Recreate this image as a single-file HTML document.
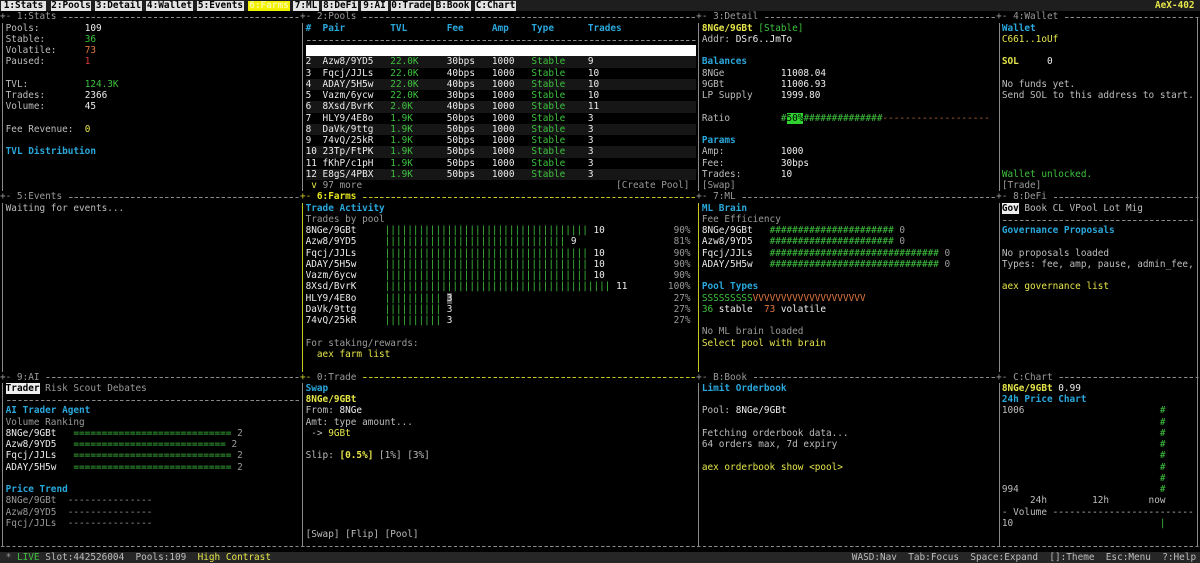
<!DOCTYPE html>
<html><head><meta charset="utf-8">
<style>
*{margin:0;padding:0;box-sizing:border-box}
body{width:1200px;height:563px;background:#000;overflow:hidden;position:relative;font-family:"DejaVu Sans Mono","Liberation Mono",monospace;font-size:9.4px;line-height:11.26px;color:#bdbdbd}
.p{position:absolute;white-space:normal}
.p>div{height:11.26px;white-space:pre}
.c{color:#2aa8dc;font-weight:bold}
.w{color:#ececec}
.gr{color:#3ec23e}
.y{color:#e6e64a}
.o{color:#e07840}
.r{color:#e03a3a}
.b{font-weight:bold}
.dim{color:#9a9a9a}
.hl{position:absolute;height:1px;background-image:repeating-linear-gradient(90deg,var(--bc) 0 3.4px,transparent 3.4px 5.66px)}
.vl{position:absolute;width:1px;background:var(--bc)}
.dl{background-image:repeating-linear-gradient(90deg,#8a8a8a 0 3.4px,transparent 3.4px 5.66px);background-size:100% 1px;background-repeat:no-repeat;background-position:1.1px 6px}
.tt{position:absolute;white-space:pre;background:#000;color:#9a9a9a}
.tab{position:absolute;top:1px;height:10px;background:#e4e4e4;color:#000;font-weight:bold;line-height:10px;text-align:center;font-size:9.4px}
.inv{background:#eee;color:#000;font-weight:bold}
</style></head><body>
<div style="position:absolute;left:0;top:0;width:1200px;height:11.26px;background:#1e1e1e"></div>
<div class="tab" style="left:1px;width:45px">1:Stats</div>
<div class="tab" style="left:51px;width:40px">2:Pools</div>
<div class="tab" style="left:95px;width:47px">3:Detail</div>
<div class="tab" style="left:146px;width:47px">4:Wallet</div>
<div class="tab" style="left:197px;width:47px">5:Events</div>
<div class="tab" style="left:248px;width:42px;background:#f2f200;color:#fafaa0">6:Farms</div>
<div class="tab" style="left:293px;width:26px">7:ML</div>
<div class="tab" style="left:322px;width:36px">8:DeFi</div>
<div class="tab" style="left:361px;width:27px">9:AI</div>
<div class="tab" style="left:391px;width:40px">0:Trade</div>
<div class="tab" style="left:434px;width:37px">B:Book</div>
<div class="tab" style="left:475px;width:41px">C:Chart</div>
<div class="p y b" style="left:1155px;top:0"><div>AeX-402</div></div>

<div class="hl" style="--bc:#8a8a8a;left:1px;top:17px;width:1198px"></div>
<div class="hl" style="--bc:#8a8a8a;left:1px;top:197px;width:1198px"></div>
<div class="hl" style="--bc:#c8c820;left:301px;top:197px;width:397px"></div>
<div class="hl" style="--bc:#8a8a8a;left:1px;top:377px;width:1198px"></div>
<div class="hl" style="--bc:#c8c820;left:301px;top:377px;width:397px"></div>
<div class="hl" style="--bc:#8a8a8a;left:1px;top:546px;width:1198px"></div>
<div class="vl" style="--bc:#8a8a8a;left:2px;top:17px;height:529px"></div>
<div class="vl" style="--bc:#8a8a8a;left:302px;top:17px;height:529px"></div>
<div class="vl" style="--bc:#c8c820;left:302px;top:198px;height:179px"></div>
<div class="vl" style="--bc:#8a8a8a;left:698px;top:17px;height:529px"></div>
<div class="vl" style="--bc:#c8c820;left:698px;top:198px;height:179px"></div>
<div class="vl" style="--bc:#8a8a8a;left:999px;top:17px;height:529px"></div>
<div class="vl" style="--bc:#8a8a8a;left:1197px;top:17px;height:529px"></div>
<div class="tt" style="left:0;top:11.26px">+- 1:Stats </div>
<div class="tt" style="left:299.98px;top:11.26px">+- 2:Pools </div>
<div class="tt" style="left:696.18px;top:11.26px">+- 3:Detail </div>
<div class="tt" style="left:996.16px;top:11.26px">+- 4:Wallet </div>
<div class="tt" style="left:0;top:191.42px">+- 5:Events </div>
<div class="tt" style="left:299.98px;top:191.42px;color:#c8c820">+- <span class="b" style="color:#e6e61e">6:Farms</span> </div>
<div class="tt" style="left:696.18px;top:191.42px">+- 7:ML </div>
<div class="tt" style="left:996.16px;top:191.42px">+- 8:DeFi </div>
<div class="tt" style="left:0;top:371.58px">+- 9:AI </div>
<div class="tt" style="left:299.98px;top:371.58px;color:#c8c820">+- <span style="color:#9a9a9a">0:Trade</span> </div>
<div class="tt" style="left:696.18px;top:371.58px">+- B:Book </div>
<div class="tt" style="left:996.16px;top:371.58px">+- C:Chart </div>

<div class="p" style="left:5.66px;top:22.52px;width:294px">
<div>Pools:        <span class="w">109</span></div>
<div>Stable:       <span class="gr">36</span></div>
<div>Volatile:     <span class="o">73</span></div>
<div>Paused:       <span class="r">1</span></div>
<div> </div>
<div>TVL:          <span class="gr">124.3K</span></div>
<div>Trades:       <span class="w">2366</span></div>
<div>Volume:       <span class="w">45</span></div>
<div> </div>
<div>Fee Revenue:  <span class="y">0</span></div>
<div> </div>
<div class="c">TVL Distribution</div>
</div>

<div class="p w" style="left:305.64px;top:22.52px;width:390.5px">
<div class="c">#  Pair        TVL       Fee     Amp    Type      Trades</div>
<div class="dl"> </div>
<div style="background:#fff"> </div>
<div style="background:#161616">2  Azw8/9YD5   <span class="gr">22.0K</span>     30bps   1000   <span class="gr">Stable</span>    9</div>
<div>3  Fqcj/JJLs   <span class="gr">22.0K</span>     40bps   1000   <span class="gr">Stable</span>    10</div>
<div style="background:#161616">4  ADAY/5H5w   <span class="gr">22.0K</span>     40bps   1000   <span class="gr">Stable</span>    10</div>
<div>5  Vazm/6ycw   <span class="gr">22.0K</span>     30bps   1000   <span class="gr">Stable</span>    10</div>
<div style="background:#161616">6  8Xsd/BvrK   <span class="gr">2.0K</span>      40bps   1000   <span class="gr">Stable</span>    11</div>
<div>7  HLY9/4E8o   <span class="gr">1.9K</span>      50bps   1000   <span class="gr">Stable</span>    3</div>
<div style="background:#161616">8  DaVk/9ttg   <span class="gr">1.9K</span>      50bps   1000   <span class="gr">Stable</span>    3</div>
<div>9  74vQ/25kR   <span class="gr">1.9K</span>      50bps   1000   <span class="gr">Stable</span>    3</div>
<div style="background:#161616">10 23Tp/FtPK   <span class="gr">1.9K</span>      50bps   1000   <span class="gr">Stable</span>    3</div>
<div>11 fKhP/c1pH   <span class="gr">1.9K</span>      50bps   1000   <span class="gr">Stable</span>    3</div>
<div style="background:#161616">12 E8gS/4PBX   <span class="gr">1.9K</span>      50bps   1000   <span class="gr">Stable</span>    3</div>
<div class="dim"> <span class="y">v</span> 97 more                                             [Create Pool]</div>
</div>

<div class="p" style="left:701.84px;top:22.52px;width:294px">
<div><span class="y b">8NGe/9GBt</span> <span class="gr">[Stable]</span></div>
<div>Addr: <span class="w">DSr6..JmTo</span></div>
<div> </div>
<div class="c">Balances</div>
<div>8NGe          <span class="w">11008.04</span></div>
<div>9GBt          <span class="w">11006.93</span></div>
<div>LP Supply     <span class="w">1999.80</span></div>
<div> </div>
<div>Ratio         <span class="gr">#</span><span style="background:#2ed12e;color:#000">50%</span><span class="gr">##############</span><span style="color:#b86a30">-------------------</span></div>
<div> </div>
<div class="c">Params</div>
<div>Amp:          <span class="w">1000</span></div>
<div>Fee:          <span class="w">30bps</span></div>
<div>Trades:       <span class="w">10</span></div>
<div class="dim">[Swap]</div>
</div>

<div class="p" style="left:1001.82px;top:22.52px;width:195px">
<div class="c">Wallet</div>
<div class="y">C661..1oUf</div>
<div> </div>
<div><span class="y b">SOL</span>     <span class="w">0</span></div>
<div> </div>
<div>No funds yet.</div>
<div>Send SOL to this address to start.</div>
<div> </div><div> </div><div> </div><div> </div><div> </div><div> </div>
<div class="gr">Wallet unlocked.</div>
<div class="dim">[Trade]</div>
</div>

<div class="p" style="left:5.66px;top:202.68px">
<div>Waiting for events...</div>
</div>

<div class="p w" style="left:305.64px;top:202.68px;width:390px">
<div class="c">Trade Activity</div>
<div class="dim">Trades by pool</div>
<div>8NGe/9GBt     <span class="gr">||||||||||||||||||||||||||||||||||||</span> 10</div>
<div>Azw8/9YD5     <span class="gr">||||||||||||||||||||||||||||||||</span> 9</div>
<div>Fqcj/JJLs     <span class="gr">||||||||||||||||||||||||||||||||||||</span> 10</div>
<div>ADAY/5H5w     <span class="gr">||||||||||||||||||||||||||||||||||||</span> 10</div>
<div>Vazm/6ycw     <span class="gr">||||||||||||||||||||||||||||||||||||</span> 10</div>
<div>8Xsd/BvrK     <span class="gr">||||||||||||||||||||||||||||||||||||||||</span> 11</div>
<div>HLY9/4E8o     <span class="gr">||||||||||</span> <span style="background:#555">3</span></div>
<div>DaVk/9ttg     <span class="gr">||||||||||</span> 3</div>
<div>74vQ/25kR     <span class="gr">||||||||||</span> 3</div>
<div> </div>
<div class="dim">For staking/rewards:</div>
<div class="y">  aex farm list</div>
</div>
<div class="p dim" style="left:667.88px;top:225.2px;text-align:right;width:22.64px">
<div> 90%</div><div> 81%</div><div> 90%</div><div> 90%</div><div> 90%</div><div>100%</div><div> 27%</div><div> 27%</div><div> 27%</div>
</div>

<div class="p w" style="left:701.84px;top:202.68px;width:294px">
<div class="c">ML Brain</div>
<div class="dim">Fee Efficiency</div>
<div>8NGe/9GBt   <span class="gr">######################</span> <span class="dim">0</span></div>
<div>Azw8/9YD5   <span class="gr">######################</span> <span class="dim">0</span></div>
<div>Fqcj/JJLs   <span class="gr">##############################</span> <span class="dim">0</span></div>
<div>ADAY/5H5w   <span class="gr">##############################</span> <span class="dim">0</span></div>
<div> </div>
<div class="c">Pool Types</div>
<div><span class="gr">SSSSSSSSS</span><span class="o">VVVVVVVVVVVVVVVVVVVV</span></div>
<div><span class="gr">36</span> stable  <span class="o">73</span> volatile</div>
<div> </div>
<div class="dim">No ML brain loaded</div>
<div class="y">Select pool with brain</div>
</div>

<div class="p" style="left:1001.82px;top:202.68px;width:192px">
<div><span class="inv">Gov</span> Book CL VPool Lot Mig</div>
<div class="dl"> </div>
<div class="c">Governance Proposals</div>
<div> </div>
<div>No proposals loaded</div>
<div>Types: fee, amp, pause, admin_fee,</div>
<div> </div>
<div class="y">aex governance list</div>
</div>

<div class="p w" style="left:5.66px;top:382.84px;width:294px">
<div><span class="inv">Trader</span><span class="dim"> Risk Scout Debates</span></div>
<div class="dl"> </div>
<div class="c">AI Trader Agent</div>
<div class="dim">Volume Ranking</div>
<div>8NGe/9GBt   <span class="gr">============================</span> <span class="dim">2</span></div>
<div>Azw8/9YD5   <span class="gr">===========================</span> <span class="dim">2</span></div>
<div>Fqcj/JJLs   <span class="gr">============================</span> <span class="dim">2</span></div>
<div>ADAY/5H5w   <span class="gr">============================</span> <span class="dim">2</span></div>
<div> </div>
<div class="c">Price Trend</div>
<div class="dim">8NGe/9GBt  ---------------</div>
<div class="dim">Azw8/9YD5  ---------------</div>
<div class="dim">Fqcj/JJLs  ---------------</div>
</div>

<div class="p" style="left:305.64px;top:382.84px;width:390px">
<div class="c">Swap</div>
<div class="y b">8NGe/9GBt</div>
<div>From: <span class="w">8NGe</span></div>
<div>Amt: type amount...</div>
<div> -&gt; <span class="y">9GBt</span></div>
<div> </div>
<div>Slip: <span class="y b">[0.5%]</span> [1%] [3%]</div>
<div> </div><div> </div><div> </div><div> </div><div> </div><div> </div>
<div>[Swap] [Flip] [Pool]</div>
</div>

<div class="p" style="left:701.84px;top:382.84px;width:294px">
<div class="c">Limit Orderbook</div>
<div> </div>
<div>Pool: <span class="w">8NGe/9GBt</span></div>
<div> </div>
<div>Fetching orderbook data...</div>
<div>64 orders max, 7d expiry</div>
<div> </div>
<div class="y">aex orderbook show &lt;pool&gt;</div>
</div>

<div class="p" style="left:1001.82px;top:382.84px;width:192px">
<div><span class="y b">8NGe/9GBt</span> <span class="w">0.99</span></div>
<div class="c">24h Price Chart</div>
<div>1006                        <span class="gr">#</span></div>
<div>                            <span class="gr">#</span></div>
<div>                            <span class="gr">#</span></div>
<div>                            <span class="gr">#</span></div>
<div>                            <span class="gr">#</span></div>
<div>                            <span class="gr">#</span></div>
<div>                            <span class="gr">#</span></div>
<div>994                         <span class="gr">#</span></div>
<div>     24h        12h       now</div>
<div>- Volume -------------------------</div>
<div>10                          <span class="gr">|</span></div>
</div>

<div style="position:absolute;left:0;top:551.74px;width:1200px;height:11.26px;background:#262626"></div>
<div class="p" style="left:5.66px;top:551.74px"><div><span class="dim">*</span> <span class="gr">LIVE</span> Slot:442526004  Pools:109  <span class="y">High Contrast</span></div></div>
<div class="p" style="left:851.8px;top:551.74px"><div>WASD:Nav  Tab:Focus  Space:Expand  []:Theme  Esc:Menu  ?:Help</div></div>
</body></html>
